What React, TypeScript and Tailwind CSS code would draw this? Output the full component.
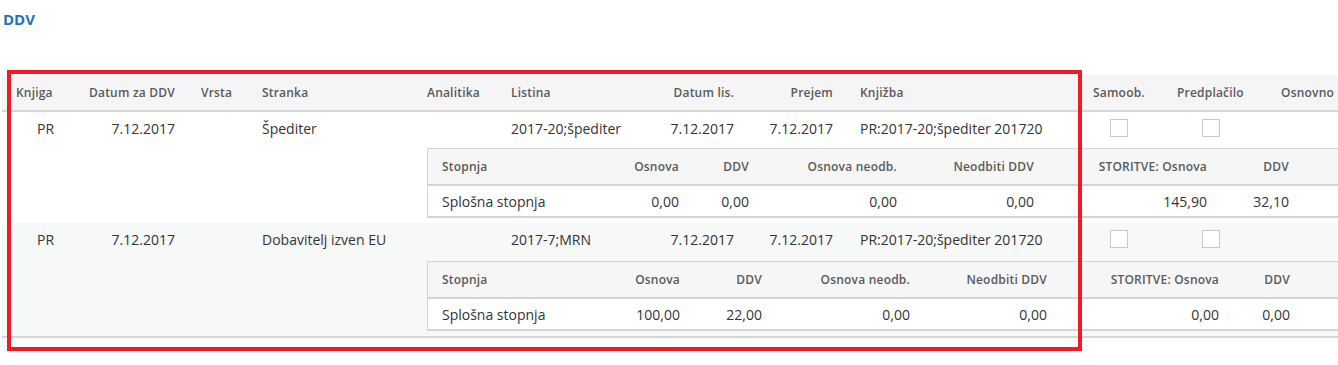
import React from 'react';

type SubRow = {
  cols: string[];
  values: string[];
};

const subHeaders = ['Stopnja', 'Osnova', 'DDV', 'Osnova neodb.', 'Neodbiti DDV', 'STORITVE: Osnova', 'DDV'];

const entries = [
  {
    knjiga: 'PR',
    datum: '7.12.2017',
    stranka: 'Špediter',
    listina: '2017-20;špediter',
    datumLis: '7.12.2017',
    prejem: '7.12.2017',
    knjizba: 'PR:2017-20;špediter 201720',
    bg: 'bg-white',
    gap: 'mt-[4px] mb-[5px]',
    sub: {
      cols: ['w-[172px]', 'w-[92px]', 'w-[70px]', 'w-[148px]', 'w-[137px]', 'w-[173px]', 'w-[82px]'],
      values: ['Splošna stopnja', '0,00', '0,00', '0,00', '0,00', '145,90', '32,10'],
    } as SubRow,
  },
  {
    knjiga: 'PR',
    datum: '7.12.2017',
    stranka: 'Dobavitelj izven EU',
    listina: '2017-7;MRN',
    datumLis: '7.12.2017',
    prejem: '7.12.2017',
    knjizba: 'PR:2017-20;špediter 201720',
    bg: 'bg-[#f7f8f8]',
    gap: 'mt-[6px] mb-[5px]',
    sub: {
      cols: ['w-[172px]', 'w-[93px]', 'w-[82px]', 'w-[148px]', 'w-[137px]', 'w-[172px]', 'w-[71px]'],
      values: ['Splošna stopnja', '100,00', '22,00', '0,00', '0,00', '0,00', '0,00'],
    } as SubRow,
  },
];

const Checkbox = ({ className }: { className: string }) => (
  <div className={`w-[18px] h-[18px] border border-[#c8c8c8] bg-white ${className}`} />
);

const SubTable = ({ sub }: { sub: SubRow }) => (
  <div className="ml-[425px] w-[980px] border-l border-t border-[#d4d4d4]">
    <div className="flex h-[37px] items-center bg-[#f6f6f6] border-b-2 border-[#d4d4d4] text-[12px] font-semibold tracking-[0.2px] text-[#5a5a5a]">
      {subHeaders.map((h, i) => (
        <div
          key={i}
          className={`${sub.cols[i]} shrink-0 whitespace-nowrap ${i === 0 ? 'pl-[14px]' : 'pr-[13px] text-right'}`}
        >
          {h}
        </div>
      ))}
    </div>
    <div className="flex h-[32px] items-center bg-white border-b-2 border-[#d4d4d4] text-[14px] text-[#333]">
      {sub.values.map((v, i) => (
        <div
          key={i}
          className={`${sub.cols[i]} shrink-0 whitespace-nowrap ${i === 0 ? 'pl-[14px]' : 'pr-[13px] text-right'}`}
        >
          {v}
        </div>
      ))}
    </div>
  </div>
);

export default function App() {
  return (
    <div className="relative w-[1338px] h-[365px] overflow-hidden bg-white font-['Open_Sans','Noto_Sans',sans-serif]">
      <h2 className="pl-[3px] pt-[9px] text-[15px] font-bold leading-[20px] text-[#1f72b8]">DDV</h2>

      <div className="ml-[2px] mt-[46px] w-[1400px]">
        {/* header */}
        <div className="flex h-[37px] items-center bg-[#f5f5f5] border-b-2 border-[#d6d6d6] text-[12px] font-semibold tracking-[0.2px] text-[#5a5a5a]">
          <div className="w-[73px] shrink-0 pl-[14px]">Knjiga</div>
          <div className="w-[113px] shrink-0 pr-[13px] text-right">Datum za DDV</div>
          <div className="w-[61px] shrink-0 pl-[13px]">Vrsta</div>
          <div className="w-[165px] shrink-0 pl-[13px]">Stranka</div>
          <div className="w-[84px] shrink-0 pl-[13px]">Analitika</div>
          <div className="w-[123px] shrink-0 pl-[13px]">Listina</div>
          <div className="w-[126px] shrink-0 pr-[13px] text-right">Datum lis.</div>
          <div className="w-[99px] shrink-0 pr-[13px] text-right">Prejem</div>
          <div className="w-[234px] shrink-0 pl-[14px]">Knjižba</div>
          <div className="w-[84px] shrink-0 pl-[13px]">Samoob.</div>
          <div className="w-[104px] shrink-0 pl-[13px]">Predplačilo</div>
          <div className="w-[140px] shrink-0 pl-[13px]">Osnovno</div>
        </div>

        {entries.map((e, idx) => (
          <div
            key={idx}
            className={`${e.bg} ${idx === entries.length - 1 ? 'border-b-2 border-[#d6d6d6]' : ''}`}
          >
            <div className="flex h-[32px] items-center text-[14px] text-[#333]">
              <div className="w-[73px] shrink-0 pl-[35px]">{e.knjiga}</div>
              <div className="w-[113px] shrink-0 pr-[13px] text-right">{e.datum}</div>
              <div className="w-[61px] shrink-0" />
              <div className="w-[165px] shrink-0 pl-[13px] whitespace-nowrap">{e.stranka}</div>
              <div className="w-[84px] shrink-0" />
              <div className="w-[123px] shrink-0 pl-[13px] whitespace-nowrap">{e.listina}</div>
              <div className="w-[126px] shrink-0 pr-[13px] text-right">{e.datumLis}</div>
              <div className="w-[99px] shrink-0 pr-[13px] text-right">{e.prejem}</div>
              <div className="w-[234px] shrink-0 pl-[14px] whitespace-nowrap">{e.knjizba}</div>
              <div className="w-[84px] shrink-0">
                <Checkbox className="ml-[30px]" />
              </div>
              <div className="w-[104px] shrink-0">
                <Checkbox className="ml-[38px]" />
              </div>
            </div>
            <div className={e.gap}>
              <SubTable sub={e.sub} />
            </div>
          </div>
        ))}
      </div>

      {/* highlight frame */}
      <div className="absolute left-[7px] top-[70px] w-[1075px] h-[281px] border-4 border-[#ed1c24] pointer-events-none" />
    </div>
  );
}
